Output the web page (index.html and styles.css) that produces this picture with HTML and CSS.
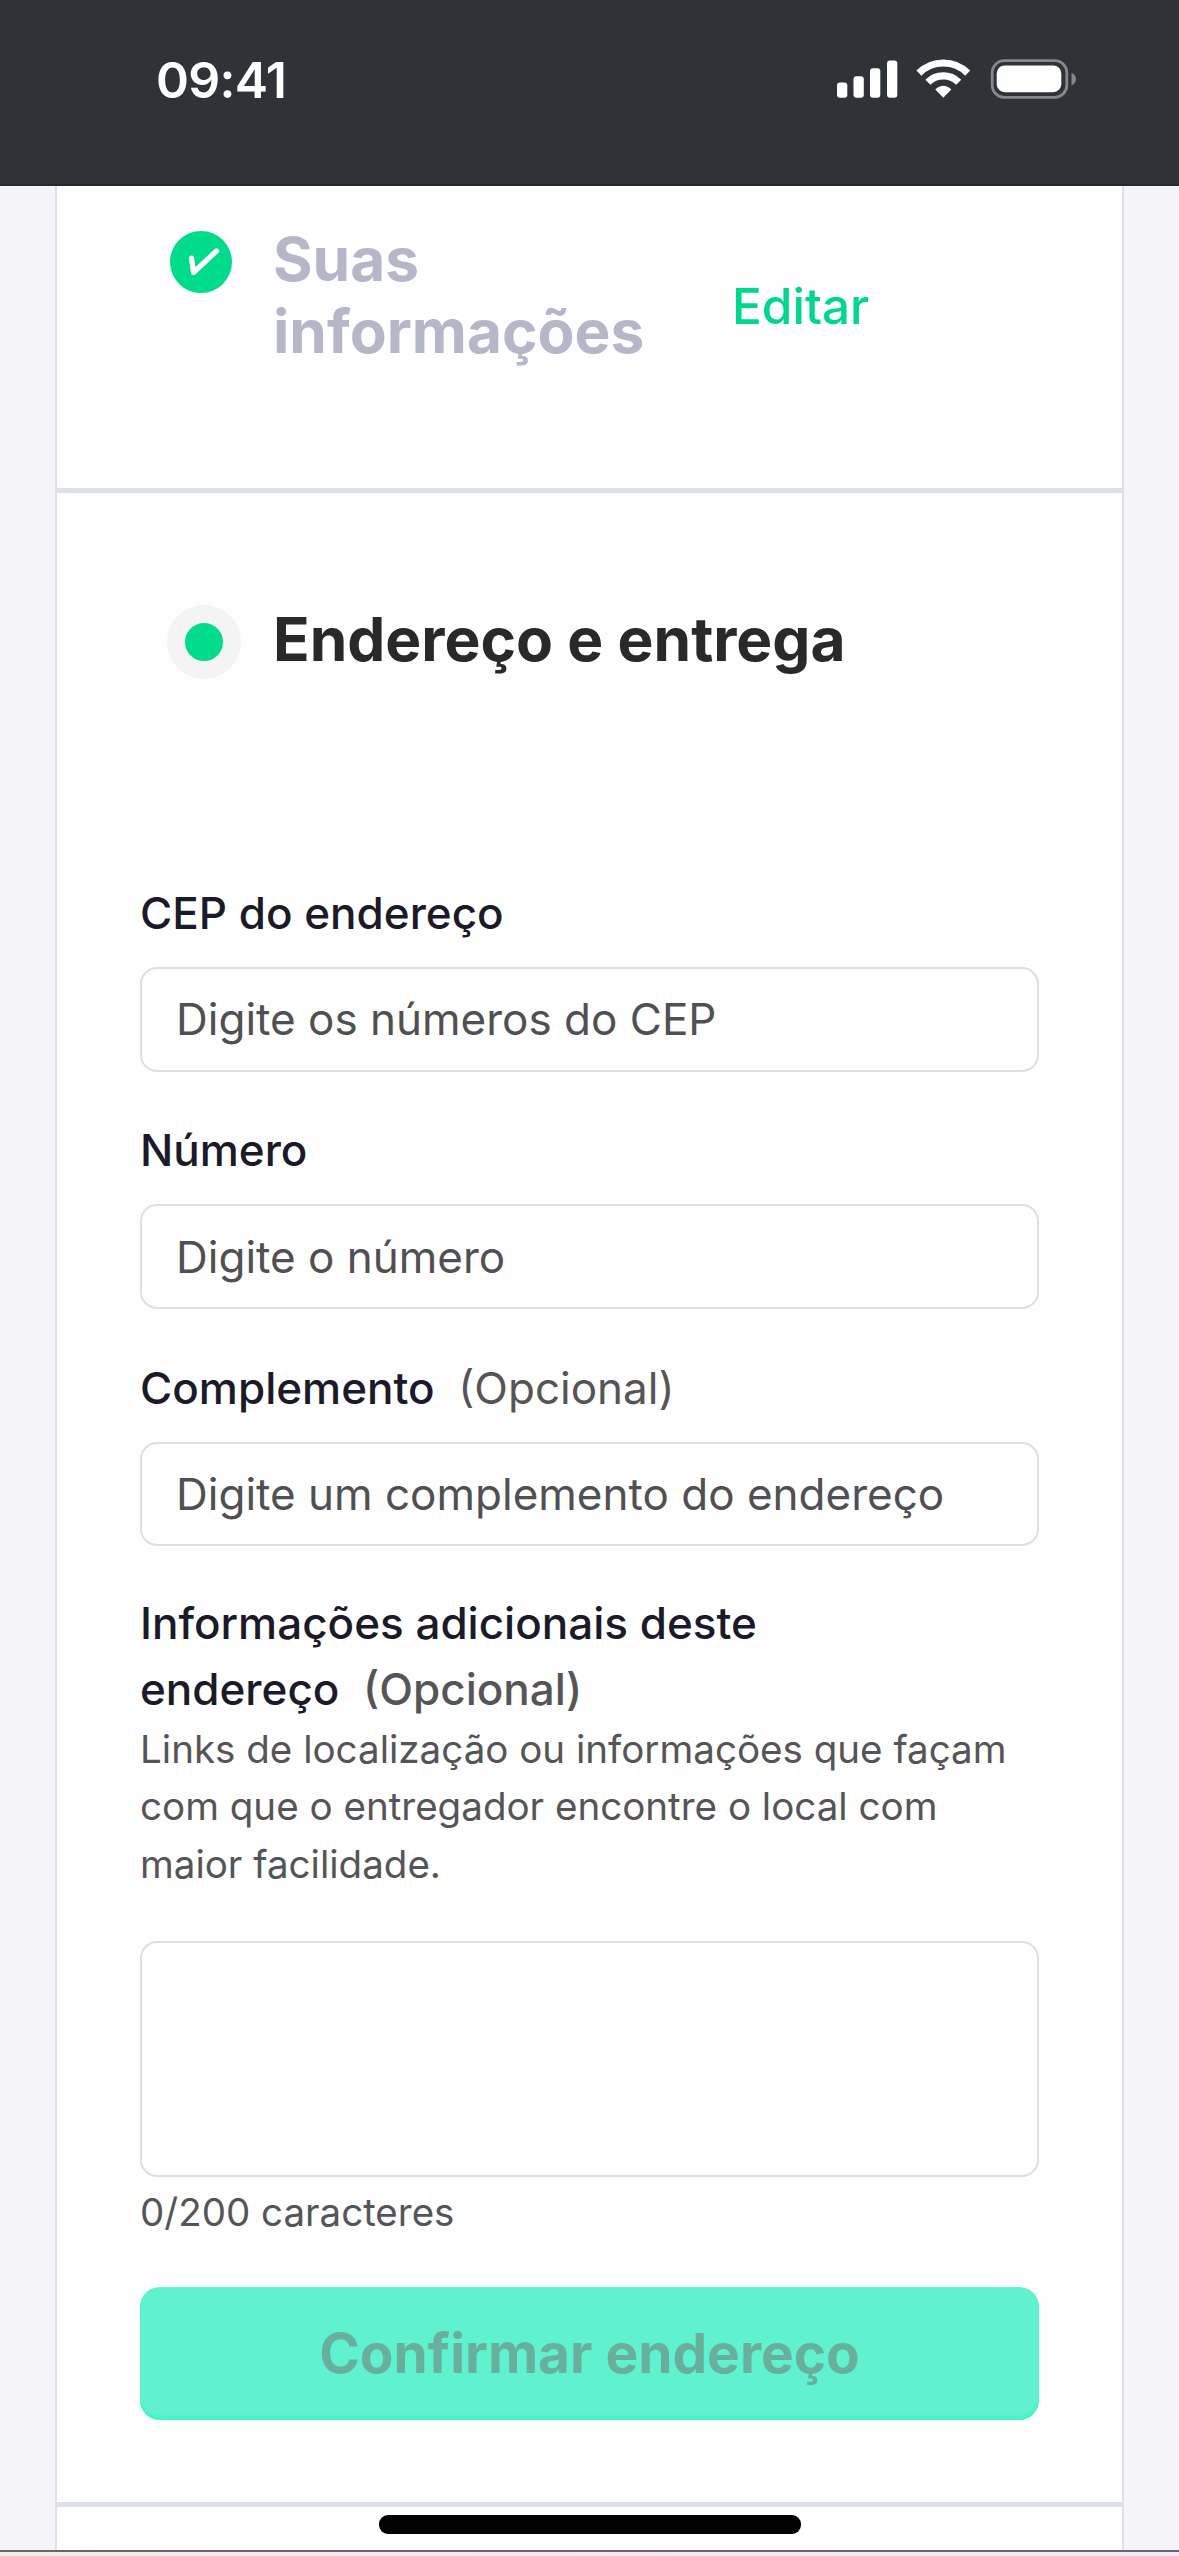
FILE: index.html
```html
<!DOCTYPE html>
<html lang="pt-BR">
<head>
<meta charset="utf-8">
<title>Endereço e entrega</title>
<link rel="stylesheet" href="styles.css">
</head>
<body>
<header class="status-bar">
  <span class="clock">09:41</span>
  <svg class="status-icons" width="240" height="40" viewBox="837 59.500 240 40" aria-hidden="true">
    <g fill="#fff">
      <rect x="837" y="83" width="10.3" height="15.3" rx="3"/>
      <rect x="853.5" y="76.7" width="10.3" height="21.6" rx="3"/>
      <rect x="870" y="68.7" width="10.3" height="29.6" rx="3"/>
      <rect x="887" y="61" width="10.3" height="37.3" rx="3"/>
      <path d="M943.3 98.300 935.3 90Q943.3 82.500 951.3 90Z"/>
      <rect x="996.7" y="66" width="64.6" height="26.7" rx="8"/>
    </g>
    <g fill="none" stroke="#fff" stroke-width="7.200">
      <path d="M927.9 82.700A21.700 21.700 0 0 1 958.7 82.700"/>
      <path d="M918.9 73.600A34.500 34.500 0 0 1 967.7 73.600"/>
    </g>
    <rect x="992.2" y="61.2" width="74.6" height="36.6" rx="12" fill="none" stroke="#85888c" stroke-width="2.8"/>
    <path d="M1071.5 73.200Q1076 75.400 1076 79.600T1071.5 86Z" fill="#85888c"/>
  </svg>
</header>
<main class="page">
  <div class="card">
    <section class="step step-done">
      <svg class="step-icon" width="74" height="62" viewBox="0 0 74 62" aria-hidden="true">
        <circle cx="34" cy="31" r="31" fill="#00dc8c"/>
        <path d="M24.500 27 26.500 41.500 49.500 20" fill="none" stroke="#fff" stroke-width="5.200" stroke-linecap="round" stroke-linejoin="round"/>
      </svg>
      <h2 class="step-title muted">Suas informações</h2>
      <a class="edit">Editar</a>
    </section>
    <section class="address">
      <div class="step-current">
        <span class="bullet"></span>
        <h2 class="step-title">Endereço e entrega</h2>
      </div>
      <form class="form">
        <label class="label" for="cep">CEP do endereço</label>
        <input class="input" id="cep" placeholder="Digite os números do CEP">
        <label class="label" for="num">Número</label>
        <input class="input" id="num" placeholder="Digite o número">
        <label class="label" for="comp">Complemento <span class="optional regular">(Opcional)</span></label>
        <input class="input" id="comp" placeholder="Digite um complemento do endereço">
        <label class="label wrap" for="info">Informações adicionais deste<br>endereço <span class="optional">(Opcional)</span></label>
        <p class="help">Links de localização ou informações que façam<br>com que o entregador encontre o local com<br>maior facilidade.</p>
        <textarea class="input area" id="info"></textarea>
        <p class="counter">0/200 caracteres</p>
        <button class="submit" type="button">Confirmar endereço</button>
      </form>
    </section>
  </div>
</main>
<div class="bottom-strip"></div>
<div class="home-indicator"></div>
</body>
</html>
```
FILE: styles.css
```css
* { box-sizing: border-box; margin: 0; }
body {
  width: 1179px; height: 2556px; overflow: hidden; position: relative;
  display: flex; flex-direction: column;
  font-family: Inter, "Liberation Sans", sans-serif;
  background: #f4f4f9;
}
.status-bar {
  height: 186px; flex: none; padding: 0 102px 0 156px;
  display: flex; justify-content: space-between; align-items: flex-start;
  background: #2f3338; border-bottom: 2px solid #25292c;
}
.clock { margin-top: 49px; font-size: 50px; line-height: 62px; font-weight: 600; color: #fff; letter-spacing: -0.7px; }
.status-icons { margin-top: 59px; }
.page { flex: 1; min-height: 0; padding: 0 55px; }
.card { height: 100%; background: #fefefe; border: solid #dfe0e7; border-width: 0 2px; }
.step { display: flex; height: 307px; padding: 45px 0 0 110px; border-bottom: 5px solid #dce1e7; align-items: flex-start; }
.step-icon { flex: none; }
.step-title { font-size: 60.4px; line-height: 72px; font-weight: 700; color: #29292b; }
.muted { width: 390px; margin: -8px 0 0 32px; color: #b5b6c8; }
.edit { margin: 44px 0 0 69px; font-size: 49.5px; line-height: 62px; font-weight: 500; color: #00d68f; }
.address { height: 2014px; padding: 112px 83px 0 83px; border-bottom: 5px solid #dce1e7; }
.step-current { display: flex; align-items: flex-start; height: 74px; padding-left: 27px; gap: 32px; }
.step-current .step-title { margin-top: -2px; }
.bullet { width: 74px; height: 74px; border: 18px solid #f5f4f5; border-radius: 50%; background: #00dc8c; }
.form { display: flex; flex-direction: column; margin-top: 201px; }
.label { font-size: 44px; line-height: 66px; font-weight: 500; color: #1b1a28; margin-bottom: 21px; }
.optional { margin-left: 12px; color: #555558; }
.regular { font-weight: 400; }
.input {
  display: block; height: 104.5px; padding: 0 34px; margin-bottom: 45.8px;
  border: 2px solid #dfdfdf; border-radius: 17px; background: #fefefe; outline: 0;
  font: 400 44px/60px Inter, sans-serif; color: #505052;
}
.input::placeholder { color: #505052; opacity: 1; }
.wrap { margin: -1.5px 0 0; }
.help { margin-top: -1.7px; font-size: 38.55px; line-height: 57.7px; color: #555558; }
.area { height: 236px; margin: 46.8px 0 0; resize: none; }
.counter { margin-top: 8px; font-size: 38.5px; line-height: 54px; color: #555558; }
.submit {
  height: 133px; margin-top: 48px; border: 0; border-radius: 20px;
  background: #60f2ce; box-shadow: inset 0 -4px 3px #45f2c9;
  font: 700 55px/66px Inter, sans-serif; color: #68b09c;
}
.bottom-strip {
  flex: none; height: 6px; border-top: 2px solid #69666d;
  background: linear-gradient(90deg, #f0eee4, #fde6ec 20%, #fbe4f3 50%, #f7e6f9 75%);
}
.home-indicator { position: absolute; left: 379px; top: 2515px; width: 422px; height: 19px; border-radius: 9px; background: #000; }
```
